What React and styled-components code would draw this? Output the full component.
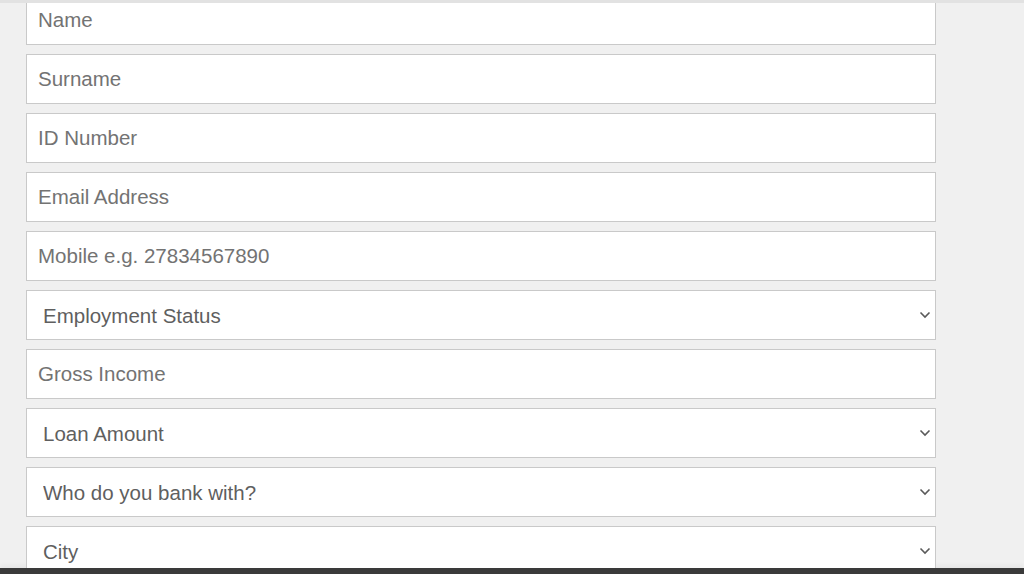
import styled, { createGlobalStyle } from "styled-components";

const GlobalStyle = createGlobalStyle`
  html, body {
    margin: 0;
    padding: 0;
    background: #f0f0f0;
    font-family: "Liberation Sans", Arial, sans-serif;
  }
  * { box-sizing: border-box; }
`;

const Viewport = styled.div`
  height: 574px;
  display: flex;
  flex-direction: column;
  overflow: hidden;
  border-top: 3px solid #e2e2e2;
  background: #f0f0f0;
`;

const Scroller = styled.div`
  flex: 1;
  overflow: hidden;
  padding-left: 26px;
`;

const Form = styled.form`
  width: 910px;
  margin-top: -8px;
  display: flex;
  flex-direction: column;
  gap: 9px;
`;

const Input = styled.input`
  height: 50px;
  width: 100%;
  border: 1px solid #c9c9c9;
  background: #fff;
  padding: 0 11px;
  font-family: inherit;
  font-size: 20.5px;
  color: #555;
  outline: none;
  &::placeholder {
    color: #737373;
  }
`;

const SelectWrap = styled.div`
  position: relative;
  height: 50px;
`;

const Select = styled.select`
  appearance: none;
  height: 50px;
  width: 100%;
  border: 1px solid #c9c9c9;
  border-radius: 0;
  background: #fff;
  padding: 0 40px 0 16px;
  font-family: inherit;
  font-size: 20.5px;
  color: #5f5f5f;
  outline: none;
`;

const Chevron = styled.svg`
  position: absolute;
  right: 5px;
  top: 21px;
  width: 12px;
  height: 8px;
  pointer-events: none;
`;

const BottomBar = styled.div`
  height: 6px;
  background: #3a3a3a;
  box-shadow: 0 -3px 4px rgba(0, 0, 0, 0.04);
`;

const fields = [
  { type: "input", label: "Name" },
  { type: "input", label: "Surname" },
  { type: "input", label: "ID Number" },
  { type: "input", label: "Email Address" },
  { type: "input", label: "Mobile e.g. 27834567890" },
  { type: "select", label: "Employment Status" },
  { type: "input", label: "Gross Income" },
  { type: "select", label: "Loan Amount" },
  { type: "select", label: "Who do you bank with?" },
  { type: "select", label: "City" },
];

const SelectField = ({ label }) => (
  <SelectWrap>
    <Select defaultValue="">
      <option value="">{label}</option>
    </Select>
    <Chevron viewBox="0 0 12 8">
      <path d="M1.5 1.5 L6 6 L10.5 1.5" fill="none" stroke="#5a5a5a" strokeWidth="1.6" />
    </Chevron>
  </SelectWrap>
);

const App = () => {
  return (
    <>
      <GlobalStyle />
      <Viewport>
        <Scroller>
          <Form onSubmit={(e) => e.preventDefault()}>
            {fields.map((f) =>
              f.type === "input" ? (
                <Input key={f.label} placeholder={f.label} />
              ) : (
                <SelectField key={f.label} label={f.label} />
              )
            )}
          </Form>
        </Scroller>
        <BottomBar />
      </Viewport>
    </>
  );
};

export default App;
